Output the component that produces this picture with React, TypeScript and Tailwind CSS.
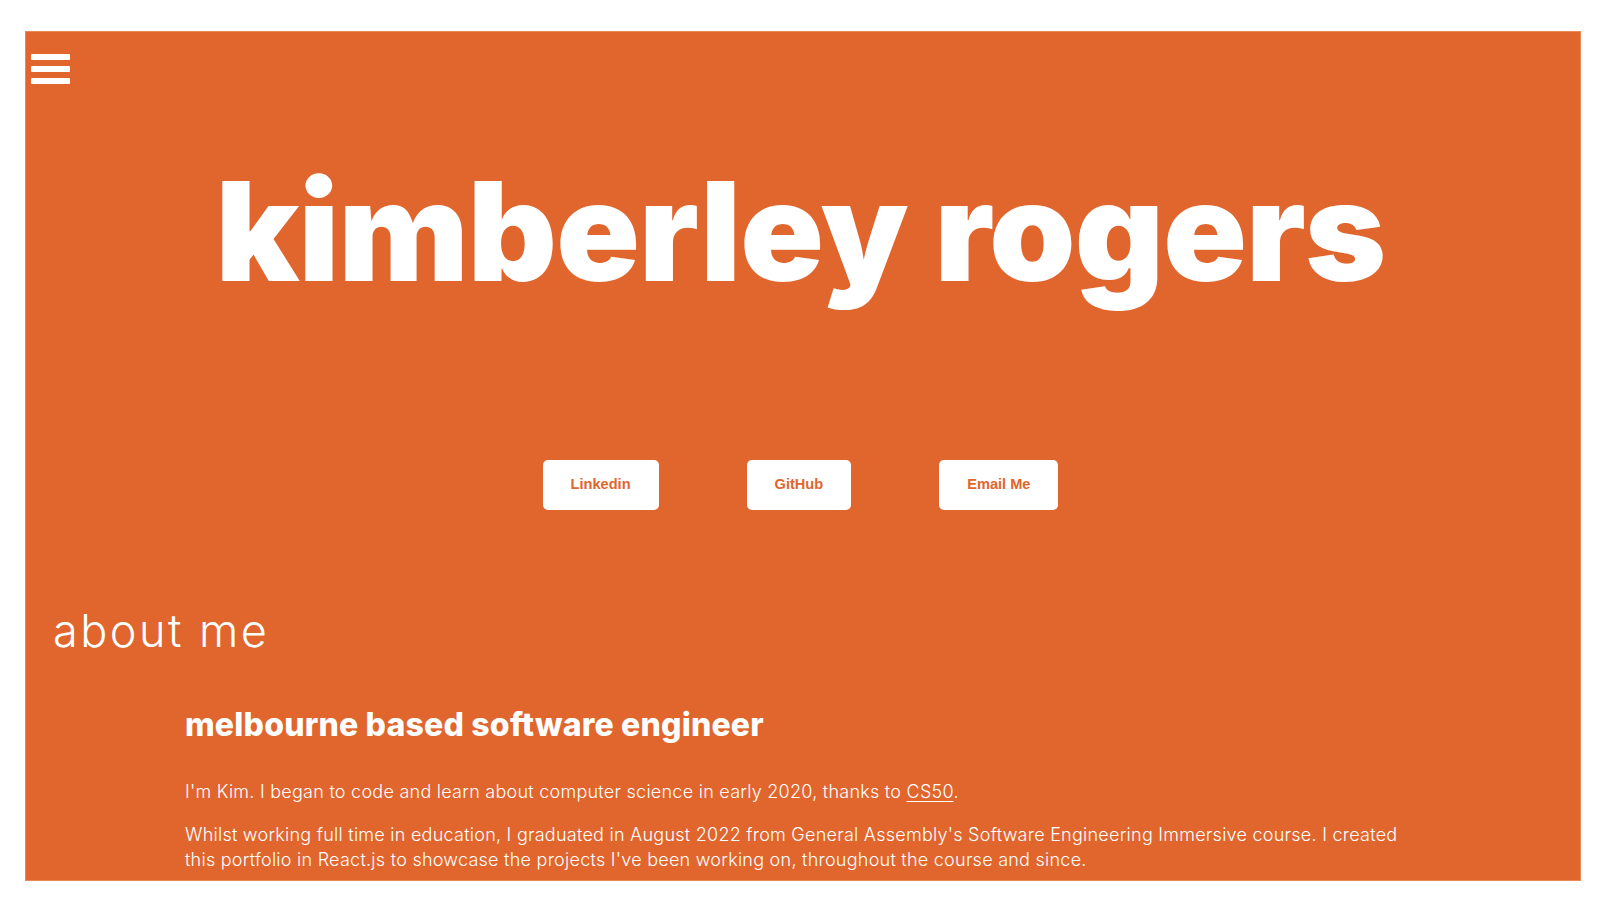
import React from "react";

export default function App() {
  return (
    <div className="w-full min-h-[910px] bg-white pt-[31px]">
      <div
        className="ml-[25px] w-[1556px] h-[850px] bg-[#e0662e] border border-[#e9895a] overflow-hidden text-white"
        style={{ fontFamily: '"Inter", "Noto Sans", sans-serif' }}
      >
        {/* hamburger */}
        <div className="mt-[22px] ml-[5px] w-[39px] h-[30px] flex flex-col justify-between">
          <div className="h-[6px] w-full bg-white rounded-[1px]" />
          <div className="h-[6px] w-full bg-white rounded-[1px]" />
          <div className="h-[6px] w-full bg-white rounded-[1px]" />
        </div>

        {/* title */}
        <h1 className="mt-[78px] pr-[5px] text-center text-[138px] leading-none font-black tracking-[-0.8px]">
          kimberley rogers
        </h1>

        {/* buttons */}
        <div className="mt-[160px] pr-[5px] flex justify-center gap-[88px]">
          {["Linkedin", "GitHub", "Email Me"].map((t) => (
            <button
              key={t}
              className="h-[50px] px-[28px] bg-white rounded-[5px] text-[#e0662e] text-[14.6px] font-bold"
              style={{ fontFamily: '"Liberation Sans", Arial, sans-serif' }}
            >
              {t}
            </button>
          ))}
        </div>

        {/* about me */}
        <h2 className="mt-[98px] ml-[27px] text-[45px] leading-none font-light tracking-[2.5px]">about me</h2>

        <div className="mx-[159px] mt-[56px]">
          <h3 className="text-[32px] leading-none font-extrabold tracking-[0.2px]">
            melbourne based software engineer
          </h3>
          <p className="mt-[38px] text-[18px] leading-[25.6px] font-light tracking-[0.25px]">
            I'm Kim. I began to code and learn about computer science in early 2020, thanks to{" "}
            <a className="underline underline-offset-[3px]" href="#">
              CS50
            </a>
            .
          </p>
          <p className="mt-[17px] text-[18px] leading-[25.6px] font-light tracking-[0.25px]">
            Whilst working full time in education, I graduated in August 2022 from General Assembly's
            Software Engineering Immersive course. I created this portfolio in React.js to showcase the
            projects I've been working on, throughout the course and since.
          </p>
        </div>
      </div>
    </div>
  );
}
